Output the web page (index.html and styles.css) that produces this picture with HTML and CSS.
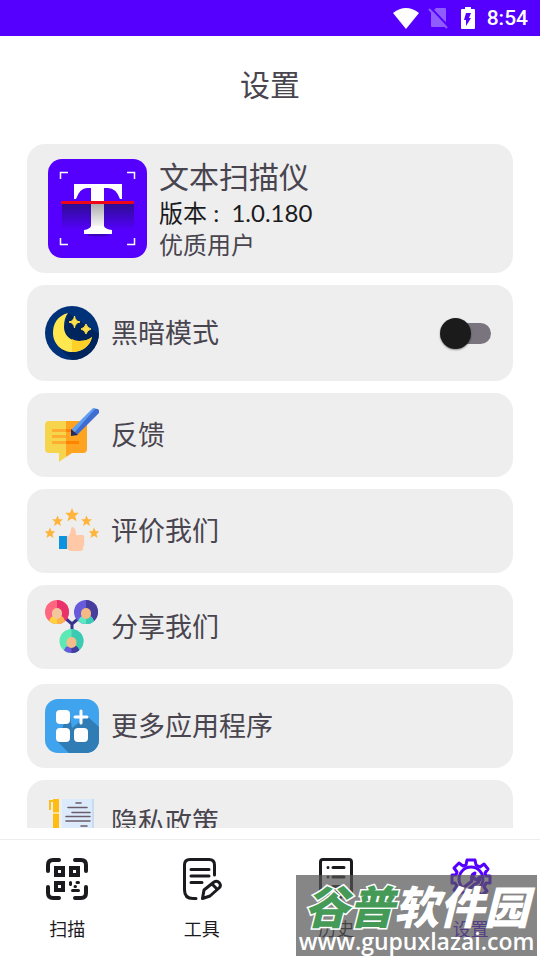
FILE: index.html
```html
<!DOCTYPE html>
<html lang="zh-CN">

<head>
    <meta charset="UTF-8">
    <meta name="viewport" content="width=device-width, initial-scale=1.0">
    <title>设置</title>
    <link rel="stylesheet" href="styles.css">
</head>

<body>
    <div class="status-bar">
        <svg class="wifi" viewBox="0 0 26 21"><path d="M0 5Q13-5 26 5L13 21Z" fill="#fff"/></svg>
        <svg class="sim" viewBox="0 0 20 22">
            <path d="M8 1H17Q18 1 18 2V19Q18 20 17 20H4Q3 20 3 19V6Z" fill="#8f5cff"/>
            <path d="M2 0L20 19" stroke="#5500ff" stroke-width="2"/>
            <path d="M1 2L19 21" stroke="#8f5cff" stroke-width="2"/>
        </svg>
        <svg class="battery" viewBox="0 0 14 22">
            <path d="M4 0H10V2H13Q14 2 14 3V21Q14 22 13 22H1Q0 22 0 21V3Q0 2 1 2H4Z" fill="#fff"/>
            <path d="M5 6H10L8 11H10L5 19V13H3Z" fill="#5500ff"/>
        </svg>
        <span>8:54</span>
    </div>

    <header>
        <h1>设置</h1>
    </header>

    <main>
        <section class="group">
            <div class="card app">
                <svg class="app-icon" viewBox="0 0 99 99">
                    <defs>
                        <linearGradient id="scan" x1="0" y1="0" x2="0" y2="1">
                            <stop offset="0" stop-color="#25107c" stop-opacity=".85"/>
                            <stop offset="1" stop-color="#25107c" stop-opacity="0"/>
                        </linearGradient>
                        <linearGradient id="stem" x1="0" y1="0" x2="0" y2="1">
                            <stop offset="0" stop-color="#aaa"/>
                            <stop offset="1" stop-color="#fff"/>
                        </linearGradient>
                    </defs>
                    <rect width="99" height="99" rx="14" fill="#5500ff"/>
                    <path d="M12.500 20V13.500H20M79 13.500H86.500V20M12.500 79V85.500H20M79 85.500H86.500V79" fill="none" stroke="#fff" stroke-width="1.500"/>
                    <rect x="14" y="44" width="72" height="28" fill="url(#scan)"/>
                    <ellipse cx="50" cy="76" rx="11" ry="1.500" fill="#3c05b8"/>
                    <path d="M26 25H74V40H72Q68 29 60 29H56V44H43V29H39Q32 29 28 40H26Z" fill="#fff"/>
                    <rect x="43" y="44" width="13" height="26" fill="url(#stem)"/>
                    <path d="M36 75V71Q42 70 43 67H56Q57 70 64 71V75Z" fill="#fff"/>
                    <rect x="13" y="42" width="73" height="3" rx="1" fill="#f00418"/>
                </svg>
                <div class="app-info">
                    <h2>文本扫描仪</h2>
                    <p class="version">版本 :&nbsp; 1.0.180</p>
                    <p>优质用户</p>
                </div>
            </div>

            <div class="card dark-mode">
                <svg class="icon" viewBox="0 0 54 54">
                    <defs><clipPath id="disc"><circle cx="27" cy="27" r="27"/></clipPath></defs>
                    <circle cx="27" cy="27" r="27" fill="#00327a"/>
                    <path d="M23 7L54 28V54H28L14 42Z" fill="#00245c" clip-path="url(#disc)"/>
                    <path d="M23 7C12 10 8 18 8 27C8 38 17 46 27 46C37 46 45 40 47 31C43 34 39 35 34 35C25 35 19 29 19 21C19 15 20 11 23 7Z" fill="#ffe84f"/>
                    <path d="M27 46C37 46 45 40 47 31C43 34 39 35 34 35Q30 35 27 33Z" fill="#ffd028"/>
                    <path d="M29.500 10Q30 15 35 16Q30 17 29.500 22Q29 17 24 16Q29 15 29.500 10ZM41 18Q42 22 46 23Q42 24 41 28Q40 24 36 23Q40 22 41 18Z" fill="#ffe04a" stroke="#ffe04a"/>
                </svg>
                <label for="dark">黑暗模式</label>
                <input type="checkbox" id="dark" class="switch">
            </div>

            <a href="#feedback" class="card">
                <svg class="icon" viewBox="0 0 54 54">
                    <path d="M4 13H21V49L14 54V45H4Q0 45 0 41V17Q0 13 4 13Z" fill="#f6d44c"/>
                    <path d="M21 13H38Q42 13 42 17V41Q42 45 38 45H27L21 49Z" fill="#ffa420"/>
                    <path d="M7 22.500H21M7 28.500H21M7 34.500H21" stroke="#ffad2f" stroke-width="3"/>
                    <path d="M21 22.500H29M21 34.500H34" stroke="#ff8500" stroke-width="3"/>
                    <path d="M26 22L47 1Q49-1 51 1L31 24Z" fill="#5d9df2"/>
                    <path d="M29 25L50 1Q55 0 54 5L32 27Z" fill="#3e6ccf"/>
                    <path d="M26 21L33 27L26 28Z" fill="#252a5c"/>
                </svg>
                <span>反馈</span>
            </a>

            <a href="#rate" class="card">
                <svg class="icon" viewBox="0 0 54 54">
                    <defs><path id="star" d="M0-6L1.800-2H6L2.700 1L4 5.500L0 3L-4 5.500L-2.700 1L-6-2H-1.800Z"/></defs>
                    <g fill="#ffb43b">
                        <use href="#star" transform="translate(27 11) scale(1.150)"/>
                        <use href="#star" transform="translate(12.500 17) scale(.9)"/>
                        <use href="#star" transform="translate(41.500 17) scale(.9)"/>
                        <use href="#star" transform="translate(5 29) scale(.9)"/>
                        <use href="#star" transform="translate(49 29) scale(.9)"/>
                    </g>
                    <rect x="14" y="32" width="8" height="13" fill="#0b93e0"/>
                    <path d="M22 33Q26 30 26 25Q26 23 28 23Q31 24 31 31H38Q40 32 39 35Q40 37 39 39Q40 41 38 43Q39 47 35 47H25L22 45Z" fill="#ffc9a8"/>
                </svg>
                <span>评价我们</span>
            </a>

            <a href="#share" class="card">
                <svg class="icon" viewBox="0 0 54 54">
                    <defs>
                        <clipPath id="face"><circle r="12"/></clipPath>
                    </defs>
                    <path d="M20 18L27 24L34 18M27 24V32" fill="none" stroke="#38328c" stroke-width="3"/>
                    <g transform="translate(12 12)">
                        <circle r="12" fill="#ff6680"/><path d="M0-12A12 12 0 0 1 0 12Z" fill="#e9316c"/>
                        <g clip-path="url(#face)"><circle cy="11" r="8" fill="#ffd43b"/><path d="M0 3Q8 3 8 12H0Z" fill="#ffb14f"/></g>
                        <rect x="-5" y="-4" width="10" height="11" rx="5" fill="#f2c79b"/>
                    </g>
                    <g transform="translate(41 12)">
                        <circle r="12" fill="#675bdb"/><path d="M0-12A12 12 0 0 1 0 12Z" fill="#463d9d"/>
                        <g clip-path="url(#face)"><circle cy="11" r="8" fill="#5ee8c0"/><path d="M0 3Q8 3 8 12H0Z" fill="#3acbb4"/></g>
                        <rect x="-5" y="-4" width="10" height="11" rx="5" fill="#f5b983"/>
                    </g>
                    <g transform="translate(26.500 41)">
                        <circle r="12" fill="#5ee8b5"/><path d="M0-12A12 12 0 0 1 0 12Z" fill="#3bcbb2"/>
                        <g clip-path="url(#face)"><circle cy="12" r="8" fill="#675bdb"/><path d="M0 4Q8 4 8 12H0Z" fill="#463d9d"/></g>
                        <rect x="-5" y="-4" width="10" height="11" rx="5" fill="#f5bd8a"/>
                    </g>
                </svg>
                <span>分享我们</span>
            </a>
        </section>

        <section class="group">
            <a href="#more" class="card">
                <svg class="icon" viewBox="0 0 54 54">
                    <defs><clipPath id="tile"><rect width="54" height="54" rx="13"/></clipPath></defs>
                    <rect width="54" height="54" rx="13" fill="#3fa4ed"/>
                    <path d="M24 12L27 29L42 17L54 28V54H24L12 42Z" fill="#307cb5" clip-path="url(#tile)"/>
                    <g fill="#fff">
                        <rect x="11" y="11" width="14" height="14" rx="4"/>
                        <rect x="11" y="29" width="14" height="14" rx="4"/>
                        <rect x="29" y="29" width="14" height="14" rx="4"/>
                    </g>
                    <path d="M36 12V24M30 18H42" stroke="#fff" stroke-width="3" stroke-linecap="round"/>
                </svg>
                <span>更多应用程序</span>
            </a>

            <a href="#privacy" class="card">
                <svg class="icon" viewBox="0 0 54 54">
                    <rect x="17" y="4" width="32" height="50" fill="#dcebfb"/>
                    <path d="M48 4V54" stroke="#c7dcf2" stroke-width="2"/>
                    <path d="M31 8H36M23 12.500H42M27 17.500H45M21 21.500H45M21 26H45M36 31H42M21 36H45M21 41H45" stroke="#6c5c6a" stroke-width="1.600" stroke-linecap="round"/>
                    <path d="M9 4H13V3L14 5V46L11 52L8 46V4Z" fill="#ffbd13"/>
                    <path d="M9 6H5V15" fill="none" stroke="#ffbd13" stroke-width="2"/>
                    <path d="M8 18H14" stroke="#ffe08a" stroke-width="2"/>
                </svg>
                <span>隐私政策</span>
            </a>
        </section>
    </main>

    <nav>
        <a href="#scan-page">
            <svg viewBox="0 0 42 42" fill="none" stroke="currentColor" stroke-width="4" stroke-linecap="round">
                <path d="M2 13V7Q2 2 7 2H13M29 2H35Q40 2 40 7V13M40 29V35Q40 40 35 40H29M13 40H7Q2 40 2 35V29"/>
                <g stroke-linecap="butt"><rect x="10" y="10" width="7" height="7"/><rect x="25" y="10" width="7" height="7"/><rect x="10" y="25" width="7" height="7"/></g>
                <path d="M24.500 24.500V26.500M31 24.500H32.500M29 28.500H29.500M26.500 32.500H32.500" stroke-width="3"/>
            </svg>
            <span>扫描</span>
        </a>
        <a href="#tools">
            <svg viewBox="0 0 42 42" fill="none" stroke="currentColor" stroke-width="3" stroke-linecap="round" stroke-linejoin="round">
                <path d="M33.500 17V7Q33.500 1.500 28 1.500H9Q3.500 1.500 3.500 7V32Q3.500 40.500 12 40.500H15M10 11.500H28M10 18H28M10 24.500H21"/>
                <path d="M23 32L33 24Q36 22 38.500 25Q40.500 28 38 30L29 38L21.500 40.500ZM31 26L36 31"/>
            </svg>
            <span>工具</span>
        </a>
        <a href="#history">
            <svg viewBox="0 0 42 42" fill="none" stroke="currentColor" stroke-width="3" stroke-linecap="round" stroke-linejoin="round">
                <path d="M5.500 38V4Q5.500 1.500 8 1.500H34Q36.500 1.500 36.500 4V38L31 34L26 39L21 34L16 39L11 34Z"/>
                <path d="M18 9.500H29M18 19H29M18 28.500H29M13 9.500V9.600M13 19V19.100M13 28.500V28.600"/>
            </svg>
            <span>历史</span>
        </a>
        <a href="#settings" class="active">
            <svg viewBox="0 0 42 42" fill="none" stroke="currentColor" stroke-width="3" stroke-linejoin="round">
                <path d="M17 2H25L26 7L30 9L34 6L38 11L35 15L36 18H40V25H36L34 29L37 33L32 37L28 34L25 35L24 40H17L16 35L12 34L8 37L4 32L7 28L5 25H2V17H6L7 14L4 10L9 5L13 8L16 7Z"/>
                <path d="M13 30A12 12 0 1 1 29 30M13 30L22 23Q20 17 25 15L23 19L26 22L30 19Q30 25 25 26L17 33"/>
            </svg>
            <span>设置</span>
        </a>
    </nav>

    <div class="watermark">
        <div class="mark-name"><b>谷普</b>软件园</div>
        <div class="mark-url">www.gupuxlazai.com</div>
    </div>
</body>

</html>
```
FILE: styles.css
```css
* {
    margin: 0;
    padding: 0;
    box-sizing: border-box;
}

body {
    display: flex;
    flex-direction: column;
    height: 100vh;
    position: relative;
    overflow: hidden;
    background-color: #fff;
    color: #49454f;
    font-family: Lato, "Noto Sans CJK SC", sans-serif;
}

a {
    color: inherit;
    text-decoration: none;
}

svg {
    display: block;
    flex-shrink: 0;
}

.status-bar {
    display: flex;
    align-items: center;
    justify-content: flex-end;
    height: 36px;
    padding: 0 12px;
    background-color: #5500ff;
    color: #fff;
    font-family: Roboto, sans-serif;
    font-size: 21px;
    font-weight: 500;
}

.wifi {
    width: 26px;
    height: 21px;
    margin-right: 9px;
}

.sim {
    width: 20px;
    height: 22px;
    margin-right: 13px;
}

.battery {
    width: 14px;
    height: 22px;
    margin-right: 12px;
}

header {
    padding: 26px 0 38px;
    text-align: center;
}

h1, h2 {
    font-size: 30px;
    line-height: 44px;
    font-weight: 400;
}

main {
    flex: 1;
    min-height: 0;
    overflow: hidden;
    padding: 0 27px;
    margin-bottom: 11px;
}

.group {
    display: flex;
    flex-direction: column;
    gap: 12px;
    margin-bottom: 15px;
}

.card {
    display: flex;
    align-items: center;
    gap: 12px;
    padding: 15px 18px;
    border-radius: 18px;
    background-color: #eee;
    font-size: 27px;
    line-height: 40px;
}

.icon {
    width: 54px;
    height: 54px;
}

.app {
    padding: 12px 21px;
}

.app-icon {
    width: 99px;
    height: 99px;
}

.app-info p {
    font-size: 24px;
    line-height: 32px;
}

.app-info h2 {
    line-height: 41px;
}

.app-info .version {
    color: #1b1b1f;
}

.dark-mode {
    padding: 21px 22px 21px 18px;
}

.switch {
    appearance: none;
    display: flex;
    align-items: center;
    position: relative;
    width: 51px;
    height: 31px;
    margin-left: auto;
}

.switch::before {
    content: "";
    position: absolute;
    inset: 5px 0 5px 4px;
    border-radius: 11px;
    background-color: #79747e;
}

.switch::after {
    content: "";
    position: relative;
    width: 31px;
    height: 31px;
    border-radius: 50%;
    background-color: #1b1b1b;
    box-shadow: 0 1px 2px rgba(0, 0, 0, 0.4);
}

.switch:checked::after {
    margin-left: auto;
}

nav {
    display: grid;
    grid-template-columns: repeat(4, 1fr);
    height: 121px;
    border-top: 1px solid #eee;
    padding: 18px 2px 0 0;
    color: #1b1b1f;
    font-size: 18px;
    line-height: 26px;
}

nav a {
    display: flex;
    flex-direction: column;
    align-items: center;
    gap: 16px;
}

nav svg {
    width: 42px;
    height: 42px;
}

nav .active {
    color: #5500ff;
}

.watermark {
    position: absolute;
    right: 3px;
    bottom: 4px;
    width: 241px;
    height: 81px;
    padding-top: 9px;
    background-color: rgba(84, 84, 84, 0.71);
    color: #fff;
    text-align: center;
    white-space: nowrap;
}

.mark-name {
    font-size: 45px;
    line-height: 46px;
    font-weight: 900;
    font-style: italic;
}

.mark-name b {
    color: #469a57;
    -webkit-text-stroke: 3px #fff;
    paint-order: stroke fill;
}

.mark-url {
    font-family: "Open Sans", sans-serif;
    font-size: 23px;
    line-height: 22px;
    font-weight: 600;
}
```
